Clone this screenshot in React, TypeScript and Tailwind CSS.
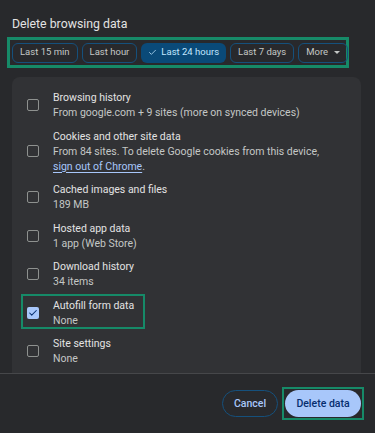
import { Check } from "lucide-react";

type Row = {
  title: string;
  sub: React.ReactNode;
  checked?: boolean;
  marked?: boolean;
};

const rows: Row[] = [
  { title: "Browsing history", sub: "From google.com + 9 sites (more on synced devices)" },
  {
    title: "Cookies and other site data",
    sub: (
      <>
        From 84 sites. To delete Google cookies from this device,{" "}
        <span className="text-[#a8c7fa] underline underline-offset-2">sign out of Chrome</span>.
      </>
    ),
  },
  { title: "Cached images and files", sub: "189 MB" },
  { title: "Hosted app data", sub: "1 app (Web Store)" },
  { title: "Download history", sub: "34 items" },
  { title: "Autofill form data", sub: "None", checked: true, marked: true },
  { title: "Site settings", sub: "None" },
];

const chips = ["Last 15 min", "Last hour", "Last 24 hours", "Last 7 days"];

function Checkbox({ checked }: { checked?: boolean }) {
  if (checked) {
    return (
      <div className="w-[12px] h-[12px] shrink-0 rounded-[2px] bg-[#a8c7fa] flex items-center justify-center">
        <Check size={10} strokeWidth={2.5} className="text-[#062e6f]" />
      </div>
    );
  }
  return <div className="w-[12px] h-[12px] shrink-0 rounded-[2px] border-[1.5px] border-[#8e918f]" />;
}

export default function App() {
  return (
    <div
      className="w-[375px] h-[433px] bg-[#28292c] flex flex-col overflow-hidden text-[#e3e3e3]"
      style={{ fontFamily: "Roboto, 'Liberation Sans', sans-serif" }}
    >
      <div className="pt-[14px] pl-[12px] text-[12.3px] leading-[20px] text-[#e3e3e3]">Delete browsing data</div>

      <div className="mt-[3px] ml-[7px] w-[342px] h-[31px] border-[3px] border-[#168a68] flex items-center gap-[4px] pl-[2px]">
        {chips.map((c) =>
          c === "Last 24 hours" ? (
            <div
              key={c}
              className="h-[20px] px-[7px] shrink-0 whitespace-nowrap rounded-[6px] bg-[#0a4a78] text-[#c2e7ff] text-[9.5px] flex items-center gap-[4px]"
            >
              <Check size={9} strokeWidth={2} />
              {c}
            </div>
          ) : (
            <div
              key={c}
              className="h-[20px] px-[7px] shrink-0 whitespace-nowrap rounded-[6px] border border-[#15507c] text-[#c4c7c5] text-[9.5px] flex items-center"
            >
              {c}
            </div>
          )
        )}
        <div className="h-[20px] px-[7px] shrink-0 whitespace-nowrap rounded-[6px] border border-[#15507c] text-[#c4c7c5] text-[9.5px] flex items-center gap-[6px]">
          More
          <span className="w-0 h-0 border-l-[3px] border-r-[3px] border-t-[3px] border-l-transparent border-r-transparent border-t-[#c4c7c5]" />
        </div>
      </div>

      <div className="mt-[9px] ml-[12px] w-[349px] h-[296px] bg-[#313235] rounded-t-[8px] pt-[13px] pl-[15px] flex flex-col gap-[8.5px]">
        {rows.map((r) => (
          <div key={r.title} className="relative flex items-center gap-[14px]">
            {r.marked && (
              <div className="absolute left-[-6px] top-[-3.5px] bottom-[-1px] w-[124px] border-[2.5px] border-[#168a68]" />
            )}
            <Checkbox checked={r.checked} />
            <div className="w-[286px] text-[10.5px] leading-[15px]">
              <div className="text-[#e3e3e3]">{r.title}</div>
              <div className="text-[#c4c7c5]">{r.sub}</div>
            </div>
          </div>
        ))}
      </div>

      <div className="h-px bg-[#46474a]" />

      <div className="flex-1 flex items-start justify-end pt-[13px] pr-[11px] gap-[4px]">
        <div className="mt-[3px] h-[27px] w-[56px] rounded-full border border-[#15507c] text-[#a8c7fa] text-[10.5px] font-medium flex items-center justify-center">
          Cancel
        </div>
        <div className="border-[2.5px] border-[#168a68] p-[1px]">
          <div className="h-[27px] w-[76px] rounded-full bg-[#a8c7fa] text-[#062e6f] text-[10.5px] font-medium flex items-center justify-center">
            Delete data
          </div>
        </div>
      </div>
    </div>
  );
}
